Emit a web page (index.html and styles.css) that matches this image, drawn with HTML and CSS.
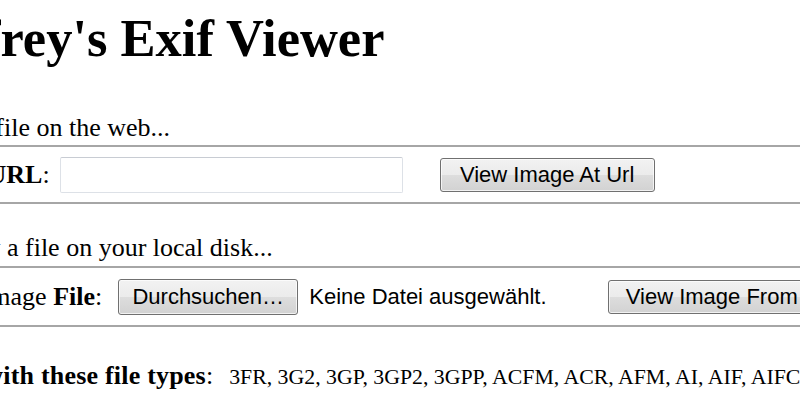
FILE: index.html
```html
<!DOCTYPE html>
<html lang="de">
<head>
<meta charset="utf-8">
<title>Jeffrey's Exif Viewer</title>
<link rel="stylesheet" href="styles.css">
</head>
<body>
<div class="page">
  <h1 class="title">Jeffrey's Exif Viewer</h1>
  <p class="intro intro-web">View a file on the web...</p>
  <form class="box box-url">
    <label class="label">Image <b>URL</b>:</label>
    <input class="text-field" type="text">
    <button class="btn btn-url" type="button">View Image At Url</button>
  </form>
  <p class="intro intro-local">Or view a file on your local disk...</p>
  <form class="box box-file">
    <label class="label">Local Image <b>File</b>:</label>
    <span class="file-picker">
      <button class="btn btn-browse" type="button">Durchsuchen…</button>
      <span class="file-status">Keine Datei ausgewählt.</span>
    </span>
    <button class="btn btn-file" type="button">View Image From File</button>
  </form>
  <p class="types"><b>Deals with these file types</b>:<span class="type-list">3FR, 3G2, 3GP, 3GP2, 3GPP, ACFM, ACR, AFM, AI, AIF, AIFC, AIFF, APE, ARW, ASF, AVI, BMP, BTF, CR2, CRW</span></p>
</div>
</body>
</html>
```

FILE: styles.css
```css
html, body {
  margin: 0;
  padding: 0;
  overflow: hidden;
  background: #ffffff;
}

body {
  font-family: "Liberation Serif", "Times New Roman", serif;
  font-size: 26px;
  line-height: 30px;
  color: #000000;
}

.page {
  margin-left: -84px;
}

.title {
  font-size: 52.5px;
  line-height: 60px;
  font-weight: bold;
  margin: 8px 0 45px;
}

.intro {
  margin: 0;
}

.intro-web {
  margin-bottom: 2px;
}

.intro-local {
  margin-top: 29px;
  margin-bottom: 3px;
}

.box {
  display: flex;
  align-items: center;
  margin: 0;
  border-top: 2px solid #a6a6a6;
  border-bottom: 2px solid #a6a6a6;
}

.box-url {
  height: 55px;
}

.box-file {
  height: 57px;
}

.label {
  white-space: nowrap;
}

.text-field {
  box-sizing: border-box;
  width: 343px;
  height: 36px;
  margin: 0 0 0 10px;
  border: 1px solid #dde1e7;
  border-top-color: #c8ccd3;
  border-radius: 2px;
  background: #ffffff;
}

.btn {
  box-sizing: border-box;
  font-family: "Liberation Sans", Arial, sans-serif;
  font-size: 22px;
  color: #000000;
  padding: 0;
  border: 1px solid #707070;
  border-radius: 3px;
  background: linear-gradient(#f2f2f2 0%, #ebebeb 50%, #dddddd 51%, #d2d2d2 100%);
  box-shadow: inset 0 0 0 1px rgba(255, 255, 255, 0.7);
  white-space: nowrap;
}

.btn-url {
  width: 215px;
  height: 34px;
  margin-left: 37px;
}

.file-picker {
  display: flex;
  align-items: center;
  margin-left: 16px;
}

.btn-browse {
  width: 180px;
  height: 36px;
}

.file-status {
  font-family: "Liberation Sans", Arial, sans-serif;
  font-size: 22px;
  margin-left: 11px;
  white-space: nowrap;
}

.btn-file {
  width: 250px;
  height: 34px;
  margin-left: 61px;
  flex-shrink: 0;
}

.types {
  margin: 34px 0 0;
  white-space: nowrap;
}

.types b {
  letter-spacing: 0.2px;
}

.type-list {
  font-size: 21.8px;
  margin-left: 16px;
}
```
